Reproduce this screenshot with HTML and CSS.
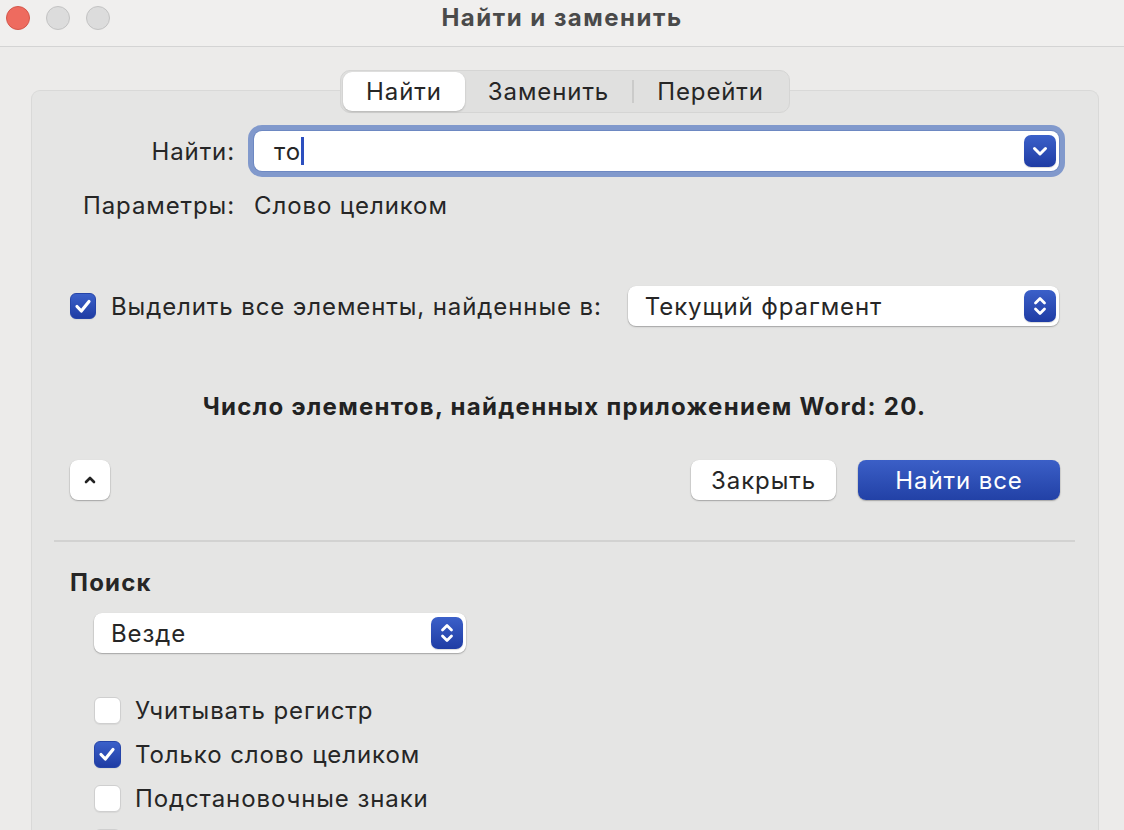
FILE: index.html
```html
<!DOCTYPE html>
<html lang="ru">
<head>
  <meta charset="UTF-8">
  <title>Найти и заменить</title>
  <link rel="stylesheet" href="styles.css">
</head>
<body>
  <div class="window">
    <div class="titlebar">
      <div class="lights">
        <span class="light red"></span>
        <span class="light"></span>
        <span class="light"></span>
      </div>
      <div class="title">Найти и заменить</div>
      <div></div>
    </div>

    <div class="content">
      <div class="tabs">
        <div class="tab selected">Найти</div>
        <div class="tab">Заменить</div>
        <div class="tab-sep"></div>
        <div class="tab">Перейти</div>
      </div>

      <div class="panel">
        <div class="form-grid">
          <div class="label">Найти:</div>
          <div class="field focused">
            <span class="field-text">то</span><span class="caret"></span>
            <span class="blue-btn">
              <svg width="32" height="32" viewBox="0 0 32 32"><path d="M10.5 13.5 L16 19 L21.5 13.5" fill="none" stroke="#fff" stroke-width="3" stroke-linecap="round" stroke-linejoin="round"/></svg>
            </span>
          </div>
          <div class="label params">Параметры:</div>
          <div class="params-value">Слово целиком</div>
        </div>

        <div class="highlight-row">
          <span class="checkbox checked">
            <svg width="26" height="26" viewBox="0 0 26 26"><path d="M7 13.5 L11.3 18 L19 8.5" fill="none" stroke="#fff" stroke-width="3.2" stroke-linecap="round" stroke-linejoin="round"/></svg>
          </span>
          <span class="check-label">Выделить все элементы, найденные в:</span>
          <div class="select wide">
            <span>Текущий фрагмент</span>
            <span class="blue-btn">
              <svg width="32" height="32" viewBox="0 0 32 32"><path d="M11.5 13 L16 8.5 L20.5 13 M11.5 19 L16 23.5 L20.5 19" fill="none" stroke="#fff" stroke-width="2.8" stroke-linecap="round" stroke-linejoin="round"/></svg>
            </span>
          </div>
        </div>

        <div class="message">Число элементов, найденных приложением Word: 20.</div>

        <div class="button-row">
          <button class="btn square">
            <svg width="16" height="16" viewBox="0 0 16 16"><path d="M4 10 L8 6 L12 10" fill="none" stroke="#222" stroke-width="2.6" stroke-linecap="round" stroke-linejoin="round"/></svg>
          </button>
          <div class="spacer"></div>
          <button class="btn">Закрыть</button>
          <button class="btn primary">Найти все</button>
        </div>

        <div class="divider"></div>

        <div class="section-title">Поиск</div>
        <div class="select narrow">
          <span>Везде</span>
          <span class="blue-btn">
            <svg width="32" height="32" viewBox="0 0 32 32"><path d="M11.5 13 L16 8.5 L20.5 13 M11.5 19 L16 23.5 L20.5 19" fill="none" stroke="#fff" stroke-width="2.8" stroke-linecap="round" stroke-linejoin="round"/></svg>
          </span>
        </div>

        <div class="options">
          <div class="option-row">
            <span class="checkbox"></span>
            <span>Учитывать регистр</span>
          </div>
          <div class="option-row">
            <span class="checkbox checked">
              <svg width="26" height="26" viewBox="0 0 26 26"><path d="M7 13.5 L11.3 18 L19 8.5" fill="none" stroke="#fff" stroke-width="3.2" stroke-linecap="round" stroke-linejoin="round"/></svg>
            </span>
            <span>Только слово целиком</span>
          </div>
          <div class="option-row">
            <span class="checkbox"></span>
            <span>Подстановочные знаки</span>
          </div>
          <div class="option-row">
            <span class="checkbox"></span>
          </div>
        </div>
      </div>
    </div>
  </div>
</body>
</html>
```

FILE: styles.css
```css
    * {
      box-sizing: border-box;
    }
    body {
      margin: 0;
      font-family: Inter, "Noto Sans", sans-serif;
      color: #262626;
      background: #ecebea;
    }
    .window {
      width: 1124px;
      height: 830px;
      overflow: hidden;
      display: flex;
      flex-direction: column;
      background: #ecebea;
    }

    /* title bar */
    .titlebar {
      height: 47px;
      flex: none;
      display: grid;
      grid-template-columns: 1fr auto 1fr;
      align-items: start;
      padding-top: 5px;
      background: #f0efee;
      border-bottom: 1px solid #d4d4d4;
    }
    .lights {
      display: flex;
      gap: 16px;
      padding: 1px 0 0 6px;
    }
    .light {
      width: 24px;
      height: 24px;
      border-radius: 50%;
      background: #dcdcdc;
      border: 1px solid #c3c3c3;
    }
    .light.red {
      background: #ee6b5f;
      border-color: #d4574b;
    }
    .title {
      font-size: 24px;
      line-height: 26px;
      font-weight: 700;
      letter-spacing: 1.5px;
      color: #4a4a4a;
    }

    /* body */
    .content {
      flex: 1;
      display: flex;
      flex-direction: column;
      align-items: center;
      padding: 0 25px 0 31px;
      letter-spacing: 0.9px;
    }
    .tabs {
      position: relative;
      z-index: 1;
      margin-top: 23px;
      margin-bottom: -23px;
      height: 43px;
      display: flex;
      align-items: center;
      padding: 2px;
      background: #e0e0df;
      border: 1px solid #d5d5d4;
      border-radius: 10px;
      font-size: 24px;
    }
    .tab {
      height: 39px;
      display: flex;
      align-items: center;
      padding: 0 23px;
      border-radius: 9px;
    }
    .tab.selected {
      background: #fff;
      box-shadow: 0 1px 2px rgba(0, 0, 0, 0.2);
    }
    .tab-sep {
      width: 2px;
      height: 23px;
      background: #cbcbca;
    }
    .panel {
      align-self: stretch;
      flex: 1;
      background: #e5e5e4;
      border: 1px solid #d9d9d8;
      border-bottom: none;
      border-radius: 9px 9px 0 0;
      padding: 40px 39px 0 38px;
      font-size: 24px;
    }

    .form-grid {
      display: grid;
      grid-template-columns: 165px 1fr;
      column-gap: 19px;
      row-gap: 20px;
      align-items: center;
    }
    .label {
      text-align: right;
      white-space: nowrap;
    }
    .field {
      height: 40px;
      display: flex;
      align-items: center;
      padding: 0 3px 0 20px;
      background: #fff;
      border-radius: 8px;
    }
    .field.focused {
      box-shadow: 0 0 0 1px #6d88c2, 0 0 0 6px #8199cc;
    }
    .caret {
      width: 3px;
      height: 28px;
      background: #2c4fbf;
      margin-right: auto;
    }
    .params,
    .params-value {
      line-height: 30px;
    }

    .blue-btn {
      width: 32px;
      height: 32px;
      flex: none;
      border-radius: 7px;
      background: linear-gradient(#3b60c9, #1f3ca4);
      box-shadow: 0 1px 1px rgba(0, 0, 0, 0.15);
      display: flex;
    }

    .highlight-row {
      display: flex;
      align-items: center;
      margin-top: 65px;
    }
    .checkbox {
      width: 26px;
      height: 26px;
      flex: none;
      border-radius: 6px;
      background: #fff;
      border: 1px solid #cfcfcf;
      box-shadow: 0 1px 1px rgba(0, 0, 0, 0.06);
      display: flex;
    }
    .checkbox.checked {
      background: linear-gradient(#3b60c9, #1f3ca4);
      border-color: #2544a8;
    }
    .checkbox.checked svg {
      margin: -1px;
    }
    .check-label {
      margin-left: 15px;
      white-space: nowrap;
    }
    .select {
      height: 40px;
      display: flex;
      align-items: center;
      justify-content: space-between;
      padding: 0 3px 0 17px;
      background: #fff;
      border-radius: 8px;
      box-shadow: 0 0.5px 0 0.5px rgba(0, 0, 0, 0.12), 0 1px 2px rgba(0, 0, 0, 0.18);
    }
    .select.wide {
      flex: 1;
      margin-left: 26px;
    }
    .select.narrow {
      width: 372px;
      margin: 15px 0 0 24px;
    }

    .message {
      margin-top: 66px;
      line-height: 30px;
      text-align: center;
      font-weight: 700;
      letter-spacing: 1.3px;
      color: #222;
      white-space: nowrap;
    }

    .button-row {
      display: flex;
      align-items: center;
      gap: 22px;
      margin-top: 38px;
    }
    .spacer {
      flex: 1;
    }
    .btn {
      height: 40px;
      padding: 0 20px;
      font: inherit;
      letter-spacing: inherit;
      color: #262626;
      background: #fff;
      border: none;
      border-radius: 8px;
      box-shadow: 0 0.5px 0 0.5px rgba(0, 0, 0, 0.12), 0 1px 2px rgba(0, 0, 0, 0.18);
    }
    .btn.square {
      width: 40px;
      padding: 0;
      display: flex;
      align-items: center;
      justify-content: center;
    }
    .btn.primary {
      width: 202px;
      color: #fff;
      background: linear-gradient(#3b5fc7, #2241a6);
      margin-right: -1px;
    }

    .divider {
      height: 2px;
      background: #d2d2d1;
      margin: 40px -16px 0 -16px;
    }
    .section-title {
      margin-top: 26px;
      line-height: 30px;
      font-weight: 700;
      letter-spacing: 1.2px;
    }

    .options {
      margin-top: 35px;
      padding-left: 24px;
    }
    .option-row {
      height: 44px;
      display: flex;
      align-items: center;
      gap: 14px;
    }
    .option-row .checkbox {
      width: 27px;
      height: 27px;
    }
```
